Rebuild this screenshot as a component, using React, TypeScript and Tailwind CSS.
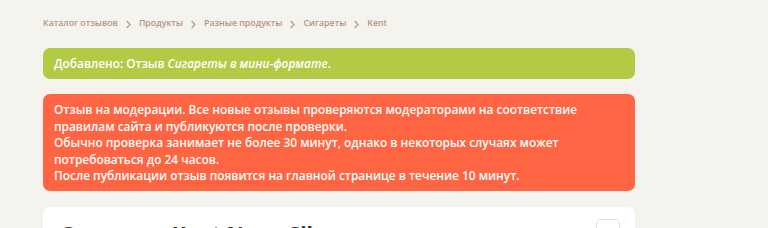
import React from "react";

const Chevron = () => (
  <svg width="5" height="9" viewBox="0 0 5 9" className="mx-[8px] shrink-0">
    <path d="M0.7 1l3.3 3.5L0.7 8" fill="none" stroke="#b9a291" strokeWidth="1.5" />
  </svg>
);

export default function App() {
  const crumbs = ["Каталог отзывов", "Продукты", "Разные продукты", "Сигареты", "Kent"];
  return (
    <div
      className="w-[768px] h-[228px] overflow-hidden bg-[#f5f3ee]"
      style={{ fontFamily: '"Open Sans", sans-serif' }}
    >
      <div className="ml-[43px] w-[592px] pt-[15px]">
        <nav className="flex items-center h-[18px] text-[8.8px] font-semibold text-[#b39783]">
          {crumbs.map((c, i) => (
            <React.Fragment key={c}>
              {i > 0 && <Chevron />}
              <span>{c}</span>
            </React.Fragment>
          ))}
        </nav>
        <div className="mt-[15px] h-[31px] rounded-[7px] bg-[#b3cb44] flex items-center px-[11px] text-[11.85px] font-semibold text-white">
          <span>
            Добавлено: Отзыв <i className="font-semibold">Сигареты в мини-формате</i>.
          </span>
        </div>
        <div className="mt-[15px] rounded-[7px] bg-[#ff6542] pl-[11px] pr-[10px] pt-[7px] pb-[7px] text-[11.9px] leading-[16.6px] font-semibold text-white whitespace-nowrap">
          Отзыв на модерации. Все новые отзывы проверяются модераторами на соответствие
          <br />
          правилам сайта и публикуются после проверки.
          <br />
          Обычно проверка занимает не более 30 минут, однако в некоторых случаях может
          <br />
          потребоваться до 24 часов.
          <br />
          После публикации отзыв появится на главной странице в течение 10 минут.
        </div>
        <div className="mt-[16px] h-[80px] rounded-[8px] bg-white relative px-[17px] pt-[12px]">
          <h1 className="text-[21px] font-bold text-[#333333] leading-[30px]">Сигареты Kent Nano Silver</h1>
          <div className="absolute right-[15px] top-[12px] w-[24px] h-[24px] rounded-[5px] border border-[#e6e3de] bg-white" />
        </div>
      </div>
    </div>
  );
}
